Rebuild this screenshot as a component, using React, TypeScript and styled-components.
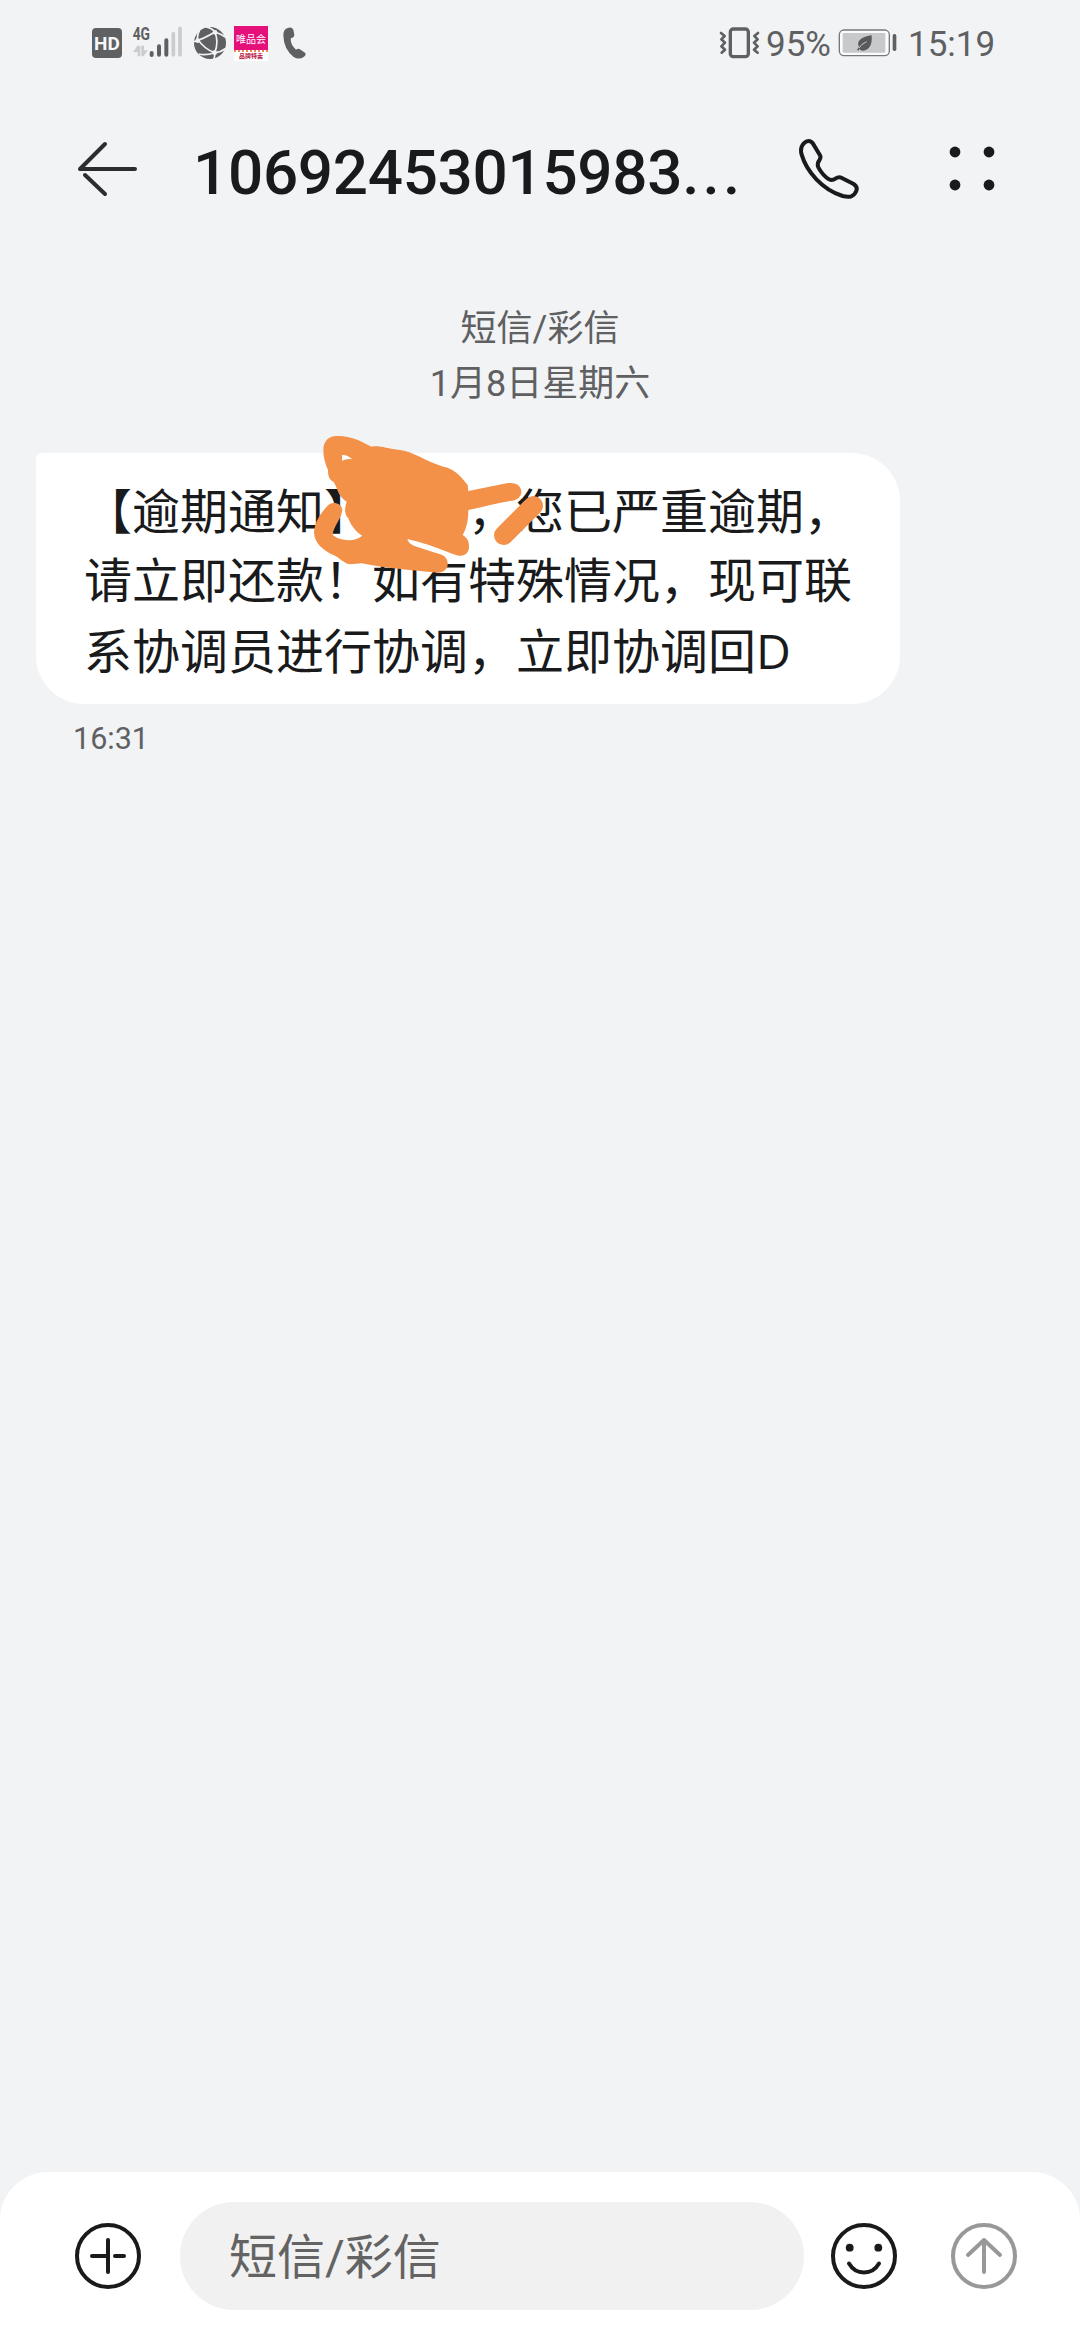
import React from 'react';
import styled, { createGlobalStyle } from 'styled-components';

const font = `Roboto, 'Noto Sans CJK SC', sans-serif`;
const ink = '#191a1b';
const muted = '#5f6062';

const GlobalStyle = createGlobalStyle`
  body { margin: 0; background: #f1f2f4; font-family: ${font}; }
  * { box-sizing: border-box; }
  svg { display: block; flex: none; }
`;

const Screen = styled.div`
  width: 1080px;
  height: 2340px;
  display: flex;
  flex-direction: column;
  background: #f1f3f5;
  color: ${ink};
  overflow: hidden;
`;

const StatusBar = styled.header`
  height: 86px;
  padding: 0 88px 0 92px;
  display: flex;
  justify-content: space-between;
  align-items: center;
`;

const StatusGroup = styled.div`
  display: flex;
  align-items: center;
  height: 86px;
`;

const StatusText = styled.span<{ $left: number; $width: number }>`
  margin-left: ${p => p.$left}px;
  width: ${p => p.$width}px;
  font-size: 35px;
  line-height: 40px;
  color: ${muted};
  padding-top: 3px;
  white-space: nowrap;
`;

const HdBadge = styled.span`
  width: 30px;
  height: 30px;
  border-radius: 4px;
  background: ${muted};
  color: #f6f7f8;
  font: 700 19px/31px ${font};
  text-align: center;
`;

const Signal = styled.svg`
  margin-left: 10px;
`;

const Globe = styled.svg`
  margin-left: 10px;
`;

const ShopTile = styled.div`
  margin-left: 8px;
  width: 34px;
  height: 35px;
  background: #fff;
  overflow: hidden;
  display: flex;
  flex-direction: column;
  text-align: center;
  white-space: nowrap;
`;

const ShopName = styled.span`
  height: 24px;
  background: #e5107a;
  color: #fff;
  font: 400 10px/25px 'Noto Sans CJK SC', sans-serif;
`;

const ShopFoot = styled.span`
  height: 11px;
  border-top: 2px dotted #e88a55;
  color: #b5123f;
  font: 700 6px/8px 'Noto Sans CJK SC', sans-serif;
`;

const Handset = styled.svg`
  margin-left: 15px;
`;

const BatteryIcon = styled.svg`
  margin-left: 8px;
`;

const TitleBar = styled.div`
  height: 166px;
  padding: 0 84px 0 75px;
  display: flex;
  align-items: center;
`;

const Title = styled.h1`
  margin: 0 0 0 52px;
  width: 604px;
  padding-top: 7px;
  font-size: 62px;
  line-height: 72px;
  font-weight: 500;
  letter-spacing: -0.3px;
  white-space: nowrap;
`;

const Dots = styled.span`
  letter-spacing: 3.2px;
`;

const MoreIcon = styled.svg`
  margin-left: auto;
`;

const Thread = styled.main`
  flex: 1;
  display: flex;
  flex-direction: column;
  align-items: flex-start;
  padding: 50px 36px 0;
`;

const Dateline = styled.div`
  width: 100%;
  text-align: center;
  font-size: 36px;
  line-height: 55px;
  color: ${muted};
`;

const Bubble = styled.div`
  position: relative;
  margin-top: 41px;
  width: 864px;
  height: 251px;
  padding: 25px 0 0 48px;
  border-radius: 6px 48px 48px 48px;
  background: #fff;
  font-size: 48px;
  line-height: 69px;
`;

const Line = styled.div`
  height: 69px;
  white-space: pre;
  text-spacing-trim: space-all;
`;

const Latin = styled.span`
  font-family: 'Open Sans', Roboto, sans-serif;
`;

const Scribble = styled.svg`
  position: absolute;
  left: 264px;
  top: -33px;
`;

const Stamp = styled.time`
  margin: 16px 0 0 37px;
  font-size: 30.5px;
  line-height: 38px;
  color: ${muted};
`;

const Composer = styled.footer`
  height: 168px;
  padding: 30px 60px 0 72px;
  display: flex;
  align-items: flex-start;
  background: #fff;
  border-radius: 48px 48px 0 0;
`;

const Field = styled.div`
  width: 624px;
  height: 108px;
  margin: 0 24px 0 36px;
  padding-left: 49px;
  border-radius: 54px;
  background: #f1f1f1;
  color: #636363;
  font-size: 48px;
  line-height: 112px;
`;

const RoundIcon = styled.svg<{ $gap?: number }>`
  margin-top: 18px;
  margin-left: ${p => p.$gap ?? 0}px;
`;

export default function App() {
  return (
    <Screen lang="zh-CN">
      <GlobalStyle />
      <StatusBar>
        <StatusGroup>
          <HdBadge>HD</HdBadge>
          <Signal width="52" height="48" viewBox="156 28 156 144">
            <text x="158" y="92" fontFamily="Roboto" fontWeight="700" fontSize="54" textLength="52" lengthAdjust="spacingAndGlyphs" fill={muted}>4G</text>
            <g strokeLinecap="round" strokeWidth="11" fill="none">
              <path d="M215 130v6M237 110v25M259 92v43" stroke={muted} strokeWidth="12" />
              <path d="M280 72v63M300 56v79" stroke="#cbccce" />
            </g>
            <path d="M159 128L172 108H181V140H173V127ZM184 108H192V122H204L190 140H184Z" fill="#cbccce" />
          </Signal>
          <Globe width="32" height="34" viewBox="339 48 96 102">
            <circle cx="387" cy="99" r="48" fill={muted} />
            <g stroke="#f1f3f5" strokeWidth="5" fill="none">
              <path d="M336 96Q365 88 402 66Q420 72 434 82M374 50Q394 55 402 66Q414 98 401 128Q402 140 398 148M401 128Q370 118 349 86Q350 70 356 60M401 128Q420 126 434 115M401 128Q374 137 353 132" />
            </g>
            <g fill="#f1f3f5"><circle cx="402" cy="67" r="7" /><circle cx="350" cy="92" r="7" /><circle cx="401" cy="128" r="7" /></g>
          </Globe>
          <ShopTile>
            <ShopName>唯品会</ShopName>
            <ShopFoot>品牌特卖</ShopFoot>
          </ShopTile>
          <Handset width="23" height="32" viewBox="609 52 69 96">
            <path d="M621 56Q635 50 640 60L643 75Q643 83 633 85Q629 103 648 120Q655 115 662 120L675 129Q680 135 672 141Q657 152 641 142Q611 119 610 77Q610 61 621 56Z" fill={muted} />
          </Handset>
        </StatusGroup>
        <StatusGroup>
          <svg width="42" height="32" viewBox="60 48 126 96" fill="none" stroke={muted} strokeLinejoin="round" strokeLinecap="round">
            <rect x="94" y="54" width="54" height="83" rx="9" strokeWidth="10" />
            <path d="M66 66l11 9-10 10 11 10-11 11 11 10-10 9M177 66l-11 9 10 10-11 10 11 11-11 10 11 9" strokeWidth="8" />
          </svg>
          <StatusText $left={5} $width={64}>95%</StatusText>
          <BatteryIcon width="59" height="28" viewBox="415 56 177 84">
            <rect x="419" y="59" width="150" height="77" rx="14" fill="#fbfbfc" stroke="#77787a" strokeWidth="4" />
            <rect x="429" y="68" width="128" height="59" rx="4" fill="#c8c9ca" />
            <path d="M516 75Q519 119 490 121Q481 121 480 115L476 121L472 118L478 110Q465 84 516 75Z" fill="#58595b" />
            <path d="M478 113Q483 102 501 94" stroke="#c8c9ca" strokeWidth="3" fill="none" />
            <rect x="579" y="71" width="11" height="51" rx="5" fill={muted} />
          </BatteryIcon>
          <StatusText $left={11} $width={84}>15:19</StatusText>
        </StatusGroup>
      </StatusBar>

      <TitleBar>
        <svg width="66" height="60" viewBox="0 0 66 60" fill="none" stroke="#2c2d2f" strokeWidth="4" strokeLinecap="round">
          <path d="M5 30H60M5 30L30 5M10 36L30 55" />
        </svg>
        <Title>10692453015983<Dots>...</Dots></Title>
        <svg width="66" height="66" viewBox="111 46 198 198" fill="none" stroke={ink} strokeWidth="12" strokeLinejoin="round">
          <path d="M125 78C131 66 139 61 146 61Q154 61 159 69L179 102Q184 109 179 117Q170 128 175 140Q188 164 207 176Q217 181 226 174Q235 168 244 171L281 190Q292 197 290 208Q286 221 274 227Q264 230 248 226C186 207 139 151 125 102Q121 88 125 78Z" />
        </svg>
        <MoreIcon width="48" height="48" viewBox="0 0 48 48" fill={ink}>
          <circle cx="7" cy="7" r="5.4" /><circle cx="41" cy="7" r="5.4" /><circle cx="7" cy="40" r="5.4" /><circle cx="41" cy="40" r="5.4" />
        </MoreIcon>
      </TitleBar>

      <Thread>
        <Dateline>短信/彩信</Dateline>
        <Dateline>1月8日星期六</Dateline>
        <Bubble>
          <Line>【逾期通知】　　，您已严重逾期，</Line>
          <Line>请立即还款！如有特殊情况，现可联</Line>
          <Line>系协调员进行协调，立即协调回<Latin>D</Latin></Line>
          <Scribble width="300" height="170" viewBox="0 0 900 510">
            <path
              fill="#f39149"
              fillRule="evenodd"
              d="M70 90C70 65 85 48 110 48C150 46 180 62 215 80C235 75 260 85 300 90C340 95 380 125 430 140C460 145 480 165 503 195L505 213L620 190C650 185 664 200 664 215C664 230 652 240 635 242C590 250 550 260 505 270C505 300 500 325 488 345C505 355 508 370 507 385C505 400 492 410 475 407C440 397 400 375 322 357C325 368 335 376 350 380L420 403C440 408 446 425 442 440C435 458 415 460 400 457C330 450 260 445 185 430L150 433C130 430 118 412 100 405C70 390 42 370 42 335C45 300 70 270 85 255C100 243 125 250 127 270C125 295 100 320 98 345C115 360 160 370 187 347C165 335 150 310 145 295C135 285 132 270 140 245C110 225 115 205 100 185C85 180 84 160 84 150C75 130 70 110 70 90ZM126 105Q140 103 157 118Q140 115 126 122Z"
            />
            <path d="M611 346L700 257" stroke="#f39149" strokeWidth="58" strokeLinecap="round" />
          </Scribble>
        </Bubble>
        <Stamp>16:31</Stamp>
      </Thread>

      <Composer>
        <RoundIcon width="72" height="72" viewBox="0 0 72 72" fill="none" stroke={ink} strokeWidth="4" strokeLinecap="round">
          <circle cx="36" cy="36" r="31" />
          <path d="M36 20V52M20 36H36M43 36H52" />
        </RoundIcon>
        <Field>短信/彩信</Field>
        <RoundIcon width="72" height="72" viewBox="0 0 72 72" fill="none" stroke={ink} strokeWidth="4" strokeLinecap="round">
          <circle cx="36" cy="36" r="31" />
          <path d="M21 43.5C28 55.5 44 55.5 51 43.5" />
          <g fill={ink} stroke="none"><circle cx="21.7" cy="27.7" r="3.9" /><circle cx="50.3" cy="27.7" r="3.9" /></g>
        </RoundIcon>
        <RoundIcon $gap={48} width="72" height="72" viewBox="0 0 72 72" fill="none" stroke="#989898" strokeWidth="4" strokeLinecap="round" strokeLinejoin="round">
          <circle cx="36" cy="36" r="31" />
          <path d="M36 52V20M20 35L36 20L52 35" />
        </RoundIcon>
      </Composer>
    </Screen>
  );
}
